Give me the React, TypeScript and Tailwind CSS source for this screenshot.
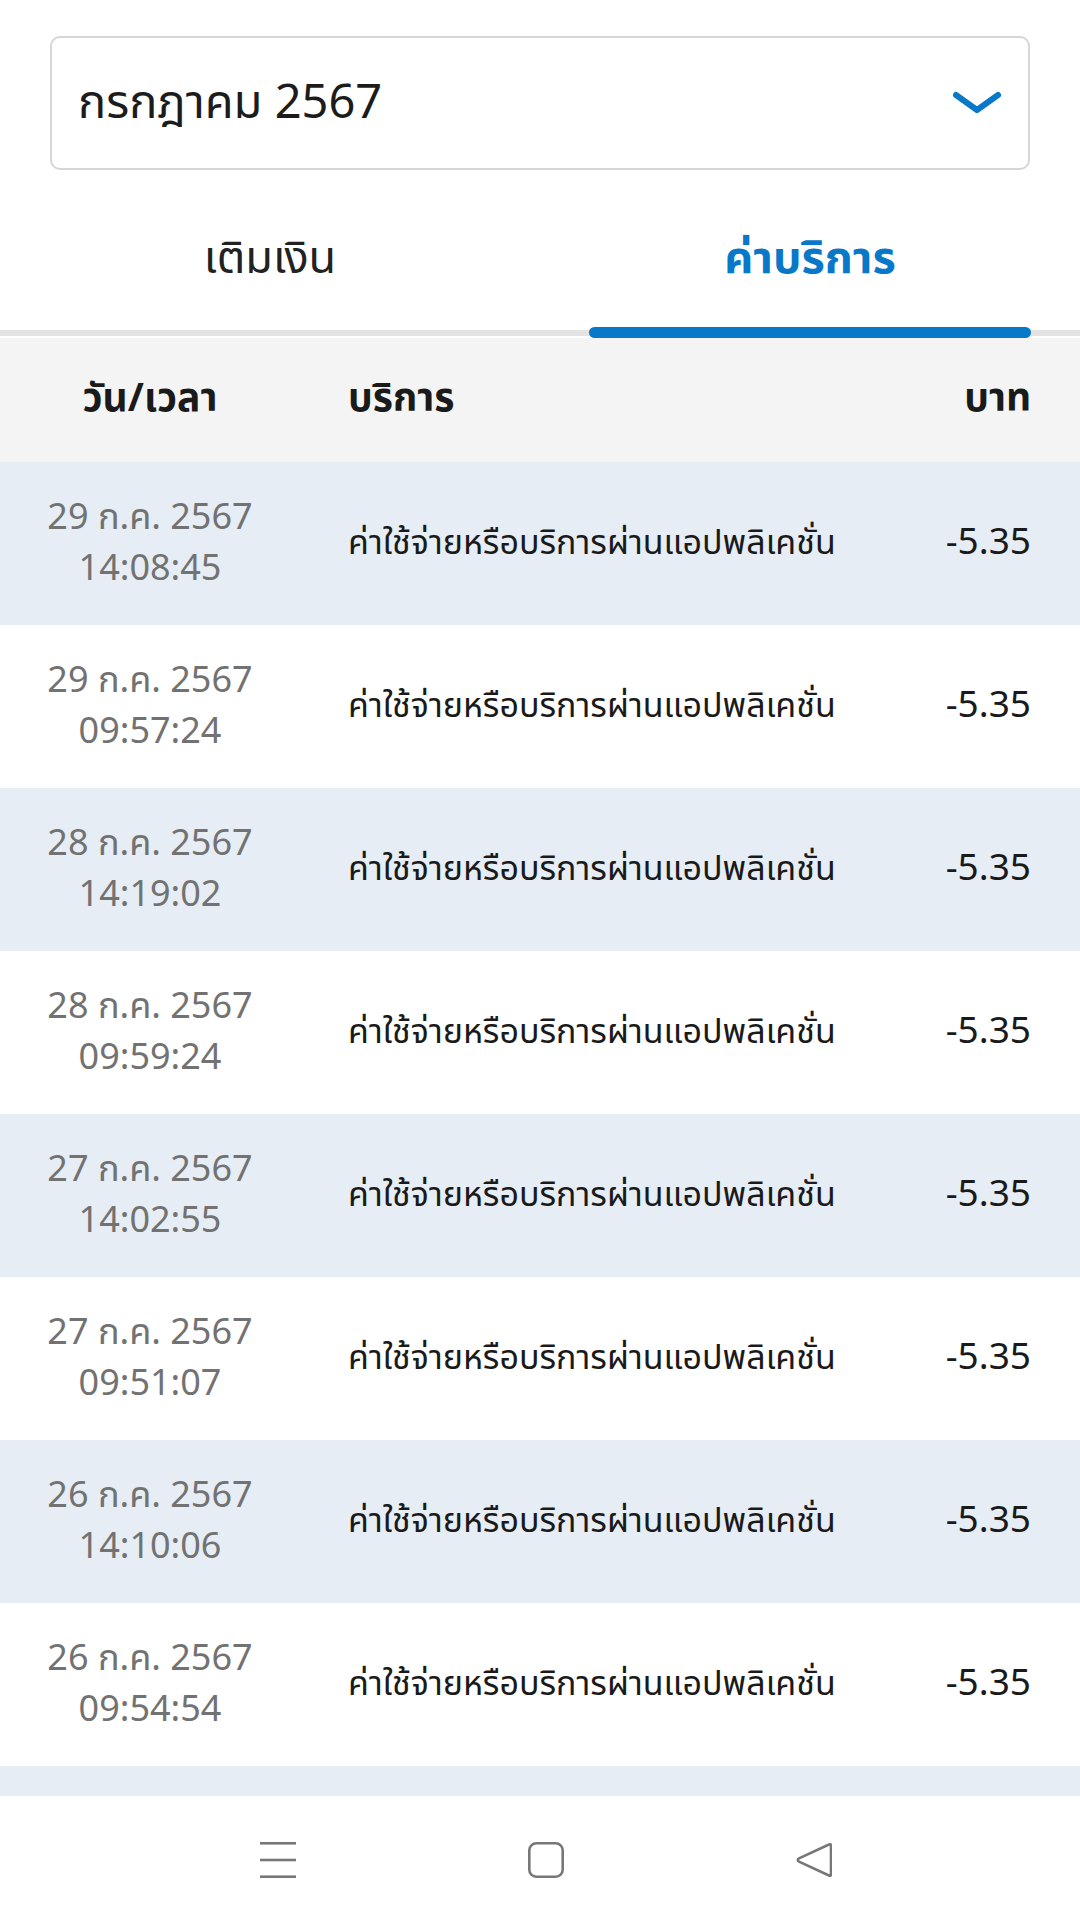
import React from "react";

const rows = [
  { date: "29 ก.ค. 2567", time: "14:08:45" },
  { date: "29 ก.ค. 2567", time: "09:57:24" },
  { date: "28 ก.ค. 2567", time: "14:19:02" },
  { date: "28 ก.ค. 2567", time: "09:59:24" },
  { date: "27 ก.ค. 2567", time: "14:02:55" },
  { date: "27 ก.ค. 2567", time: "09:51:07" },
  { date: "26 ก.ค. 2567", time: "14:10:06" },
  { date: "26 ก.ค. 2567", time: "09:54:54" },
];

const SERVICE = "ค่าใช้จ่ายหรือบริการผ่านแอปพลิเคชั่น";

const Chevron = () => (
  <svg width="50" height="24" viewBox="0 0 50 24" fill="none">
    <path d="M4 4 L25 19 L46 4" stroke="#0a78c8" strokeWidth="6" strokeLinecap="round" strokeLinejoin="round" />
  </svg>
);

const NavBar = () => (
  <div className="h-[132px] bg-white flex items-center justify-center gap-[232px] pl-[12px] pb-[4px]">
    <svg width="36" height="36" viewBox="0 0 36 36">
      <rect x="0" y="0" width="36" height="2.6" fill="#777" />
      <rect x="0" y="16.7" width="36" height="2.6" fill="#777" />
      <rect x="0" y="33.4" width="36" height="2.6" fill="#777" />
    </svg>
    <svg width="36" height="36" viewBox="0 0 36 36">
      <rect x="1.3" y="1.3" width="33.4" height="33.4" rx="7" fill="none" stroke="#777" strokeWidth="2.6" />
    </svg>
    <svg width="36" height="36" viewBox="0 0 36 36">
      <path d="M33 2.5 Q35 1.5 35 4 L35 32 Q35 34.5 33 33.5 L3 19.6 Q0.6 18 3 16.4 Z" fill="none" stroke="#777" strokeWidth="2.6" strokeLinejoin="round" />
    </svg>
  </div>
);

export default function App() {
  return (
    <div
      className="w-[1080px] h-[1928px] bg-white flex flex-col overflow-hidden text-[#1c1c1c]"
      style={{ fontFamily: '"Noto Sans Thai", "Noto Sans", "Liberation Sans", sans-serif' }}
    >
      {/* month picker */}
      <div className="mx-[50px] mt-[36px] h-[134px] border-2 border-[#d6d6d6] rounded-[10px] flex items-center justify-between pl-[26px] pr-[26px]">
        <span className="text-[47px] leading-none text-[#1c1c1c]">กรกฎาคม 2567</span>
        <Chevron />
      </div>

      {/* tabs */}
      <div className="relative flex h-[160px]">
        <div className="flex-1 flex items-center justify-center pt-[20px]">
          <span className="text-[45px] text-[#222]">เติมเงิน</span>
        </div>
        <div className="flex-1 flex items-center justify-center pt-[20px]">
          <span className="text-[45px] font-bold text-[#0a78c8]">ค่าบริการ</span>
        </div>
        <div className="absolute left-[589px] top-[157px] w-[442px] h-[11px] rounded-full bg-[#0a78c8] z-10" />
      </div>
      <div className="h-[6px] bg-[#e3e3e3]" />
      <div className="h-[2px] bg-white" />

      {/* header */}
      <div className="h-[124px] bg-[#f4f4f4] flex items-center text-[39px] font-bold text-[#1a1a1a]">
        <div className="w-[300px] text-center">วัน/เวลา</div>
        <div className="ml-[48px] flex-1">บริการ</div>
        <div className="pr-[49px]">บาท</div>
      </div>

      {/* rows */}
      <div className="flex-1 flex flex-col overflow-hidden">
        {rows.map((r, i) => (
          <div
            key={i}
            className={`shrink-0 h-[163px] flex items-center ${i % 2 === 0 ? "bg-[#e6edf4]" : "bg-white"}`}
          >
            <div className="w-[300px] flex flex-col items-center text-[36px] leading-[51px] text-[#727272]">
              <span>{r.date}</span>
              <span>{r.time}</span>
            </div>
            <div className="ml-[48px] flex-1 text-[34px] text-[#1a1a1a]">{SERVICE}</div>
            <div className="pr-[49px] text-[37px] text-[#1a1a1a]">-5.35</div>
          </div>
        ))}
        <div className="shrink-0 h-[163px] bg-[#e6edf4]" />
      </div>

      <NavBar />
    </div>
  );
}
